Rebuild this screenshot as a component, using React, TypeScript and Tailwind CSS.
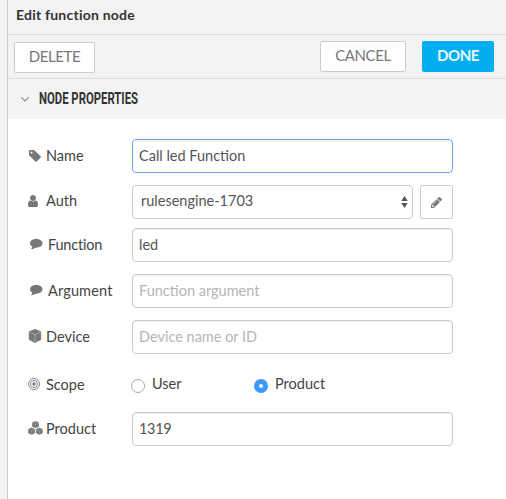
import type { ReactNode } from "react";

const paths = {
  tag: "M576 448q0-53-37.5-90.5t-90.5-37.5-90.5 37.5-37.5 90.5 37.5 90.5 90.5 37.5 90.5-37.5 37.5-90.5zm1067 576q0 53-37 90l-491 492q-39 37-91 37-53 0-90-37l-715-716q-38-37-64.5-101t-26.5-117v-416q0-52 38-90t90-38h416q53 0 117 26.5t102 64.5l715 714q37 39 37 91z",
  user: "M1536 1399q0 109-62.5 187t-150.5 78h-854q-88 0-150.5-78t-62.5-187q0-85 8.5-160.5t31.5-152 58.5-131 94-89 134.5-34.5q131 128 313 128t313-128q76 0 134.5 34.5t94 89 58.5 131 31.5 152 8.5 160.5zm-256-887q0 159-112.5 271.5t-271.5 112.5-271.5-112.5-112.5-271.5 112.5-271.5 271.5-112.5 271.5 112.5 112.5 271.5z",
  comment:
    "M1792 896q0 174-120 321.5t-326 233-450 85.5q-70 0-145-8-198 175-460 242-49 14-114 22-17 2-30.5-9t-17.5-29v-1q-3-4-.5-12t2-10 4.5-9.5l6-9 7-8.5 8-9q7-8 31-34.5t34.5-38 31-39.5 32.5-51 27-59 26-76q-157-89-247.5-220t-90.5-281q0-130 71-248.5t191-204.5 286-136.5 348-50.5q244 0 450 85.5t326 233 120 321.5z",
  pencil:
    "M491 1536l91-91-235-235-91 91v107h128v128h107zm523-928q0-22-22-22-10 0-17 7l-542 542q-7 7-7 17 0 22 22 22 10 0 17-7l542-542q7-7 7-17zm-54-192l416 416-832 832h-416v-416zm683 96q0 53-37 90l-166 166-416-416 166-165q36-38 90-38 53 0 91 38l235 234q37 39 37 91z",
};

function Glyph({ d, className }: { d: string; className: string }) {
  return (
    <svg viewBox="0 0 1792 1792" className={`shrink-0 fill-[#777] ${className}`}>
      <path d={d} />
    </svg>
  );
}

function Cube() {
  return (
    <svg viewBox="0 0 14 14" className="mb-[2px] size-[14px] shrink-0">
      <path d="M7 .4 12.8 2.7v7.8L7 13.6 1.2 10.5V2.7z" fill="#777" stroke="#777" strokeWidth=".8" strokeLinejoin="round" />
      <path d="M1.4 3.3 7 5.6l5.6-2.3M7 5.6v7.8" fill="none" stroke="#bbb" strokeWidth=".7" />
    </svg>
  );
}

function Cubes() {
  return (
    <svg viewBox="0 0 15 14" className="mb-[2px] h-[14px] w-[15px] shrink-0">
      {["translate(4 0)", "translate(0.1 6.6)", "translate(7.8 6.6)"].map((t) => (
        <g key={t} transform={t}>
          <path d="M3.5.4 6.5 1.7v3.7L3.5 6.8.5 5.4V1.7z" fill="#777" stroke="#777" strokeWidth=".7" strokeLinejoin="round" />
          <path d="M.9 2.1 3.5 3.2 6.1 2.1M3.5 3.2v3.2" fill="none" stroke="#aaa" strokeWidth=".5" />
        </g>
      ))}
    </svg>
  );
}

function Target() {
  return (
    <svg viewBox="0 0 12 12" className="mb-[2px] size-[12px] shrink-0" fill="none" stroke="#777">
      <circle cx="6" cy="6" r="5.5" strokeWidth=".9" />
      <circle cx="6" cy="6" r="3.5" strokeWidth=".9" />
      <circle cx="6" cy="6" r="1.7" fill="#777" stroke="none" />
    </svg>
  );
}

function Row({ icon, label, labelClass, className, children }: {
  icon: ReactNode;
  label: string;
  labelClass: string;
  className: string;
  children: ReactNode;
}) {
  return (
    <div className={`flex h-[34px] ${className}`}>
      <div className="flex h-[33px] w-[104px] shrink-0 items-center">
        <span className="flex w-[18px] shrink-0 items-center">{icon}</span>
        <span className={`whitespace-nowrap ${labelClass}`}>{label}</span>
      </div>
      {children}
    </div>
  );
}

const field =
  "h-[34px] rounded-[4px] border border-[#ccc] bg-white px-[6px] pb-[2px] text-[14.5px] text-[#555] shadow-[inset_0_1px_1px_rgba(0,0,0,0.075)] outline-none placeholder:text-[#b5b5b5] placeholder:opacity-100";

function Radio({ checked = false }: { checked?: boolean }) {
  return checked ? (
    <span className="mt-[3px] flex size-[14px] items-center justify-center rounded-full bg-[#3b99fc]">
      <span className="size-1 rounded-full bg-white" />
    </span>
  ) : (
    <span className="mt-[3px] size-[14px] rounded-full border border-[#aaa] bg-white" />
  );
}

export default function App() {
  return (
    <div className="flex h-[499px] w-[506px] overflow-hidden bg-[#f3f3f3] font-['Lato','Liberation_Sans',sans-serif] text-[14.5px] text-[#444]">
      <div className="w-2 shrink-0 border-r border-[#ccc]" />
      <main className="flex-1 bg-white">
        <header className="flex h-[35px] items-center border-b border-[#ddd] bg-[#f3f3f3] pb-[5px] pl-2 text-[14px] font-bold text-[#333]">
          <span className="tracking-[0.22px]">Edit function node</span>
        </header>
        <div className="flex h-11 items-start border-b border-[#ddd] bg-[#f3f3f3] pl-[6px] text-[15px] text-[#777]">
          <button className="mt-[7px] h-[31px] w-[81px] rounded-[2px] border border-[#ccc] bg-white pb-[2px] tracking-[-0.4px]">DELETE</button>
          <button className="mt-[6px] ml-[225px] h-[31px] w-[86px] rounded-[2px] border border-[#ccc] bg-white pb-[2px] tracking-[-0.4px]">CANCEL</button>
          <button className="mt-[6px] ml-4 h-[31px] w-[72px] rounded-[2px] bg-[#00aeef] pb-[2px] font-bold tracking-[-0.4px] text-[#e8f7fd]">DONE</button>
        </div>
        <div className="flex h-10 items-center bg-[#f4f4f4] pl-3 text-[#333]">
          <svg viewBox="0 0 10 10" className="size-[10px]" fill="none" stroke="#888" strokeWidth="1.2">
            <path d="M1.3 3.3 5 7 8.7 3.3" />
          </svg>
          <span className="ml-[9px] origin-left scale-x-[0.7] whitespace-nowrap font-['Roboto',sans-serif] text-[16.2px] font-bold">NODE PROPERTIES</span>
        </div>
        <form className="pl-5">
          <Row icon={<Glyph d={paths.tag} className="size-[14px]" />} label="Name" labelClass="" className="mt-5">
            <input className={`${field} w-[321px] border-[#72a7e8]!`} defaultValue="Call led Function" />
          </Row>
          <Row icon={<Glyph d={paths.user} className="-ml-[2px] mb-[2px] size-[14px]" />} label="Auth" labelClass="mb-px" className="mt-3">
            <div className={`${field} flex w-[281px] items-center justify-between pl-2! pr-1! shadow-none`}>
              <span>rulesengine-1703</span>
              <svg viewBox="0 0 7 12" className="mt-px h-3 w-[7px] fill-[#555]">
                <path d="M3.5 0 6.7 5H.3zM.3 7h6.4L3.5 12z" />
              </svg>
            </div>
            <button type="button" className="ml-[7px] flex h-[34px] w-[33px] items-center justify-center rounded-[2px] border border-[#ccc] bg-white">
              <Glyph d={paths.pencil} className="size-[13px]" />
            </button>
          </Row>
          <Row icon={<Glyph d={paths.comment} className="ml-[2px] mb-[3px] size-[12.5px]" />} label="Function" labelClass="ml-[2px] tracking-[-0.2px]" className="mt-[9px]">
            <input className={`${field} w-[321px]`} defaultValue="led" />
          </Row>
          <Row icon={<Glyph d={paths.comment} className="ml-[2px] mb-[3px] size-[12.5px]" />} label="Argument" labelClass="ml-[2px] tracking-[0.15px]" className="mt-3">
            <input className={`${field} w-[321px]`} placeholder="Function argument" />
          </Row>
          <Row icon={<Cube />} label="Device" labelClass="" className="mt-3">
            <input className={`${field} w-[321px]`} placeholder="Device name or ID" />
          </Row>
          <Row icon={<Target />} label="Scope" labelClass="" className="mt-[14px]">
            <div className="flex h-8 items-center">
              <span className="-ml-px flex w-[123px] items-center gap-[7px]"><Radio />User</span>
              <span className="flex items-center gap-[7px]"><Radio checked />Product</span>
            </div>
          </Row>
          <Row icon={<Cubes />} label="Product" labelClass="" className="mt-[10px]">
            <input className={`${field} w-[321px] tracking-[-0.3px]`} defaultValue="1319" />
          </Row>
        </form>
      </main>
    </div>
  );
}
